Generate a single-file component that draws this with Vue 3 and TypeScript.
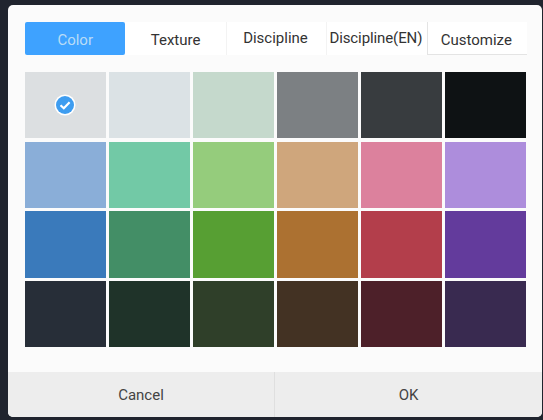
<script setup lang="ts">
const tabs = [
  { label: 'Color', cls: 'active' },
  { label: 'Texture', cls: 'low' },
  { label: 'Discipline', cls: 'high' },
  { label: 'Discipline(EN)', cls: 'high tight' },
  { label: 'Customize', cls: 'low edged' },
]
const colors: string[] = [
  '#dcdfe1', '#dbe2e5', '#c5d9cc', '#7c8083', '#383c3f', '#0e1214',
  '#8aaed8', '#72c9a6', '#95cc7c', '#cfa67c', '#dc819d', '#ad8ddc',
  '#3a7abb', '#438e66', '#579f33', '#ac7131', '#b33e4b', '#633b9c',
  '#272e38', '#1f3329', '#2f3f29', '#433223', '#4d2029', '#392a50',
]
</script>

<template>
  <div class="page">
    <div class="dialog">
      <div class="body">
        <div class="tabs">
          <div v-for="t in tabs" :key="t.label" class="tab" :class="t.cls">{{ t.label }}</div>
        </div>
        <div class="grid">
          <div v-for="(c, i) in colors" :key="i" class="cell" :style="{ background: c }">
            <svg v-if="i === 0" class="check" viewBox="0 0 22 22" width="22" height="22">
              <circle cx="11" cy="11" r="10.5" fill="#ffffff" />
              <circle cx="11" cy="11" r="9" fill="#3e9df0" />
              <path d="M6.5 11.2 L9.8 14.3 L15.6 8.2" fill="none" stroke="#ffffff" stroke-width="2.2" />
            </svg>
          </div>
        </div>
      </div>
      <div class="footer">
        <div class="btn">Cancel</div>
        <div class="btn">OK</div>
      </div>
    </div>
  </div>
</template>

<style>
html, body { margin: 0; background: #20242e; }
</style>

<style scoped>
.page {
  width: 543px;
  height: 420px;
  box-sizing: border-box;
  padding: 5px 1px 3px 8px;
  background: #20242e;
  font-family: Roboto, "Liberation Sans", sans-serif;
  overflow: hidden;
}
.dialog {
  height: 100%;
  background: #fbfbfb;
  border-radius: 5px;
  display: flex;
  flex-direction: column;
  overflow: hidden;
}
.body {
  flex: 1;
  padding: 17px 7px 0 17px;
}
.tabs {
  display: grid;
  grid-template-columns: repeat(5, 100.4px);
  height: 33px;
}
.tab {
  display: flex;
  align-items: center;
  justify-content: center;
  font-size: 15px;
  color: #333333;
  background: #ffffff;
  box-sizing: border-box;
  white-space: nowrap;
}
.tab.active {
  background: #3ea2ff;
  color: #b9dcf6;
  border-radius: 2px;
  padding-top: 3px;
}
.tab.low { padding-top: 3px; }
.tab.high { padding-bottom: 2px; padding-right: 2px; border-left: 1px solid #f3f3f3; }
.tab.tight { letter-spacing: -0.1px; }
.tab.edged {
  padding-right: 2px;
  border-left: 1px solid #e4e4e4;
  border-bottom: 1px solid #e4e4e4;
}
.grid {
  margin-top: 17px;
  display: grid;
  grid-template-columns: repeat(6, 80.5px);
  grid-auto-rows: 66.2px;
  gap: 3.5px;
}
.cell {
  display: flex;
  align-items: center;
  justify-content: center;
}
.footer {
  height: 45px;
  background: #ededed;
  display: grid;
  grid-template-columns: 266px 1fr;
}
.btn {
  display: flex;
  align-items: center;
  justify-content: center;
  font-size: 15px;
  color: #444444;
}
.btn + .btn { border-left: 1px solid #dfdfdf; }
</style>
